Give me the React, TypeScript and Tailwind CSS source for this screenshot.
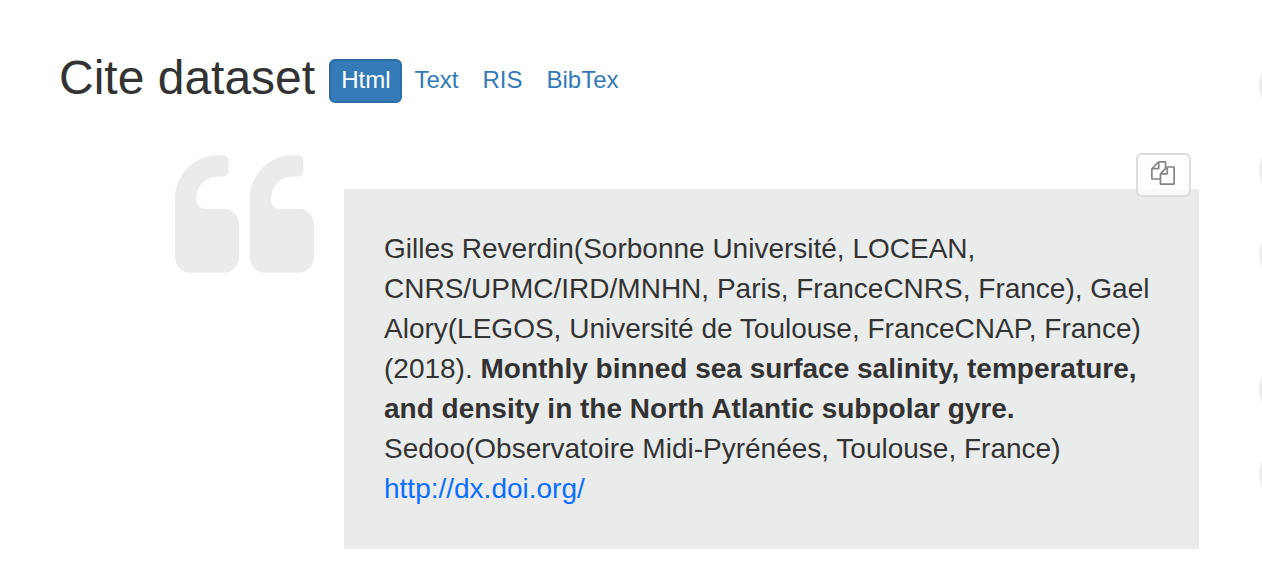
const formats = ["Html", "Text", "RIS", "BibTex"];

const railGroups = [
  ["Overview", "Contacts", "Map"],
  ["Data", "Links"],
];

function QuoteIcon() {
  return (
    <svg viewBox="64 128 1664 1408" className="h-[118px] w-[139px] fill-[#eaeceb]" aria-hidden="true">
      <path d="M832 960v384q0 80-56 136t-136 56h-384q-80 0-136-56t-56-136v-704q0-104 40.5-198.5t109.5-163.5 163.5-109.5 198.5-40.5h64q26 0 45 19t19 45v128q0 26-19 45t-45 19h-64q-106 0-181 75t-75 181v32q0 40 28 68t68 28h224q80 0 136 56t56 136z" />
      <path d="M1728 960v384q0 80-56 136t-136 56h-384q-80 0-136-56t-56-136v-704q0-104 40.5-198.5t109.5-163.5 163.5-109.5 198.5-40.5h64q26 0 45 19t19 45v128q0 26-19 45t-45 19h-64q-106 0-181 75t-75 181v32q0 40 28 68t68 28h224q80 0 136 56t56 136z" />
    </svg>
  );
}

function FilesIcon() {
  return (
    <svg viewBox="0 0 1792 1792" className="size-6 fill-[#848484]" aria-hidden="true">
      <path d="M1696 384q40 0 68 28t28 68v1216q0 40-28 68t-68 28h-960q-40 0-68-28t-28-68v-288h-544q-40 0-68-28t-28-68v-672q0-40 20-88t48-76l408-408q28-28 76-48t88-20h416q40 0 68 28t28 68v328q68-40 128-40h416zm-544 213l-299 299h299v-299zm-640-384l-299 299h299v-299zm196 647l316-316v-416h-384v416q0 40-28 68t-68 28h-416v640h512v-256q0-40 20-88t48-76zm956 804v-1152h-384v416q0 40-28 68t-68 28h-416v640h896z" />
    </svg>
  );
}

export default function App() {
  return (
    <div className="flex overflow-hidden bg-white font-['Liberation_Sans',Arial,sans-serif] text-[#333333]">
      <main className="min-w-0 flex-1 pt-[50px] pr-[60px] pb-[31px] pl-[59px]">
        <header className="flex items-center gap-[14px]">
          <h2 className="text-5xl leading-[56px]">Cite dataset</h2>
          <div className="flex pt-[6px]">
            {formats.map((format, i) => (
              <button
                key={format}
                type="button"
                aria-pressed={i === 0}
                className={
                  i === 0
                    ? "rounded-md border-2 border-[#2e6da4] bg-[#337ab7] px-[10px] pt-px pb-[3px] text-2xl leading-9 text-white"
                    : "rounded-md border-2 border-transparent px-[10px] pt-px pb-[3px] text-2xl leading-9 text-[#337ab7]"
                }
              >
                {format}
              </button>
            ))}
          </div>
        </header>

        <section className="mt-[49px] flex items-start gap-[30px] pl-[116px]">
          <div className="shrink-0">
            <QuoteIcon />
          </div>
          <div className="relative mt-[34px] min-w-0 flex-1 bg-[#eaeceb] p-10">
            <button
              type="button"
              aria-label="Copy citation"
              className="absolute -top-9 right-2 flex h-11 w-[55px] items-center justify-center rounded-md border-2 border-[#dddddd] bg-white/70 pr-px pb-1"
            >
              <FilesIcon />
            </button>
            <p className="text-[28px] leading-10">
              Gilles Reverdin(Sorbonne Université, LOCEAN, CNRS/UPMC/IRD/MNHN, Paris, FranceCNRS, France), Gael
              Alory(LEGOS, Université de Toulouse, FranceCNAP, France) (2018).{" "}
              <strong className="font-bold">
                Monthly binned sea surface salinity, temperature, and density in the North Atlantic subpolar gyre.
              </strong>{" "}
              Sedoo(Observatoire Midi-Pyrénées, Toulouse, France){" "}
              <a href="http://dx.doi.org/" className="text-[#0d6efd]">
                http://dx.doi.org/
              </a>
            </p>
          </div>
        </section>
      </main>

      <nav aria-label="Sections" className="flex w-[3px] shrink-0 flex-col gap-[70px] pt-[53px]">
        {railGroups.map((group) => (
          <div key={group[0]} className="flex flex-col gap-[21px]">
            {group.map((name) => (
              <a key={name} href={`#${name}`} aria-label={name} className="size-16 rounded-full bg-[#eeeeee]" />
            ))}
          </div>
        ))}
      </nav>
    </div>
  );
}
